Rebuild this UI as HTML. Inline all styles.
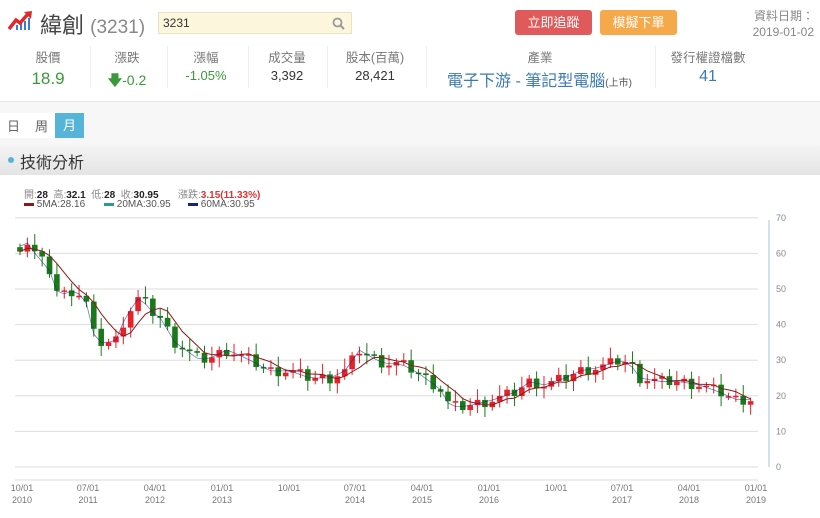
<!DOCTYPE html>
<html><head><meta charset="utf-8">
<style>
body{margin:0;width:820px;height:518px;background:#fff;font-family:"Liberation Sans","Noto Sans CJK TC",sans-serif;position:relative;overflow:hidden;color:#333}
.a{position:absolute;white-space:nowrap}
.lab{font-size:12.5px;color:#777;text-align:center;width:80px}
.val{font-size:15px;text-align:center;width:80px}
.sep{position:absolute;top:46px;width:1px;height:42px;background:#eee}
</style></head><body>
<svg class="a" style="left:8px;top:10px" width="26" height="22" viewBox="0 0 26 22">
<rect x="8" y="15" width="2" height="5" fill="#3a7bd5"/><rect x="12" y="13" width="2" height="7" fill="#3a7bd5"/><rect x="16" y="11" width="2" height="9" fill="#3a7bd5"/><rect x="20" y="8" width="2" height="12" fill="#3a7bd5"/>
<path d="M1 19 L8 10 L12 13 L20 4" stroke="#e02a2a" stroke-width="3.5" fill="none"/><path d="M16 2 L24 1 L23 9 Z" fill="#e02a2a"/></svg>
<div class="a" style="left:40px;top:8px;font-size:22px;color:#444">緯創 <span style="color:#888;font-size:19px">(3231)</span></div>
<div class="a" style="left:158px;top:12px;width:194px;height:22px;background:#fcf6dd;border:1px solid #e9e2c4;box-sizing:border-box;font-size:12px;line-height:20px;padding-left:4px">3231
<svg style="position:absolute;right:6px;top:4px" width="13" height="13"><circle cx="5.5" cy="5.5" r="4" stroke="#999" stroke-width="1.8" fill="none"/><path d="M8.5 8.5L12 12" stroke="#999" stroke-width="2"/></svg></div>
<div class="a" style="left:515px;top:10px;width:77px;height:25px;background:#df5a5a;border-radius:3px;color:#fff;font-size:13px;line-height:25px;text-align:center">立即追蹤</div>
<div class="a" style="left:600px;top:10px;width:77px;height:25px;background:#f5a94a;border-radius:3px;color:#fff;font-size:13px;line-height:25px;text-align:center">模擬下單</div>
<div class="a" style="right:6px;top:8px;font-size:12px;color:#888;line-height:16px;text-align:right">資料日期：<br>2019-01-02</div>

<div class="a lab" style="left:8px;top:47px">股價</div><div class="a val" style="left:8px;top:69px;color:#3a9a3a;font-size:17px">18.9</div>
<div class="a lab" style="left:87px;top:47px">漲跌</div><div class="a val" style="left:87px;top:70px;color:#3a9a3a;font-size:14px"><b>🡇</b>-0.2</div>
<div class="a lab" style="left:166px;top:47px">漲幅</div><div class="a val" style="left:166px;top:68px;color:#3a9a3a;font-size:13px">-1.05%</div>
<div class="a lab" style="left:247px;top:47px">成交量</div><div class="a val" style="left:247px;top:68px;font-size:13px">3,392</div>
<div class="a lab" style="left:335px;top:47px">股本(百萬)</div><div class="a val" style="left:335px;top:68px;font-size:13px">28,421</div>
<div class="a lab" style="left:500px;top:47px">產業</div><div class="a" style="left:447px;top:67px;font-size:16px;color:#3a7ab5">電子下游 - 筆記型電腦<span style="font-size:10px;color:#555">(上市)</span></div>
<div class="a lab" style="left:668px;top:47px">發行權證檔數</div><div class="a val" style="left:668px;top:68px;color:#3a7ab5;font-size:16px">41</div>
<div class="sep" style="left:90px"></div><div class="sep" style="left:167px"></div><div class="sep" style="left:248px"></div><div class="sep" style="left:327px"></div><div class="sep" style="left:426px"></div><div class="sep" style="left:655px"></div>
<div class="a" style="left:0;top:101px;width:820px;height:1px;background:#e5e5e5"></div>
<div class="a" style="left:0;top:102px;width:820px;height:44px;background:#f7f7f7"></div>
<div class="a" style="left:0;top:113px;width:55px;height:25px;background:#fff"></div>
<div class="a" style="left:7px;top:116px;font-size:13px;color:#666">日</div>
<div class="a" style="left:35px;top:116px;font-size:13px;color:#666">周</div>
<div class="a" style="left:55px;top:113px;width:29px;height:25px;background:#55b4d8;color:#fff;font-size:13px;line-height:25px;text-align:center">月</div>
<div class="a" style="left:0;top:145px;width:820px;height:30px;background:linear-gradient(#f4f4f4,#e4e4e4)"></div>
<div class="a" style="left:8px;top:157px;width:6px;height:6px;border-radius:3px;background:#55b4d8"></div>
<div class="a" style="left:20px;top:149px;font-size:16px;color:#333">技術分析</div>

<div class="a" style="left:24px;top:186px;font-size:10px;color:#888">開:<b style="color:#222">28</b>&nbsp; 高:<b style="color:#222">32.1</b>&nbsp; 低:<b style="color:#222">28</b>&nbsp; 收:<b style="color:#222">30.95</b>&nbsp;&nbsp;&nbsp;&nbsp;&nbsp;&nbsp; 漲跌:<b style="color:#d33">3.15(11.33%)</b></div>
<div class="a" style="left:24px;top:199px;font-size:10px;color:#555"><span style="display:inline-block;width:10px;height:3px;background:#8b1a1a;vertical-align:middle"></span> 5MA:28.16</div>
<div class="a" style="left:104px;top:199px;font-size:10px;color:#555"><span style="display:inline-block;width:10px;height:3px;background:#2a9a9a;vertical-align:middle"></span> 20MA:30.95</div>
<div class="a" style="left:188px;top:199px;font-size:10px;color:#555"><span style="display:inline-block;width:10px;height:3px;background:#1a237e;vertical-align:middle"></span> 60MA:30.95</div>

<svg id="c" class="a" style="left:0;top:0" width="820" height="518"></svg>
<script>
var s='';
for(var p=0;p<=70;p+=10){var y=467-3.56*p;s+='<line x1="15" x2="758" y1="'+y+'" y2="'+y+'" stroke="#ddd"/><text x="776" y="'+(y+3)+'" font-size="9" fill="#888" font-family="Liberation Sans">'+p+'</text>';}
s+='<line x1="769" x2="769" y1="220" y2="467" stroke="#aac4e0"/><line x1="15" x2="758" y1="480" y2="480" stroke="#ddd"/>';
var L=[[22,'10/01','2010'],[88,'07/01','2011'],[155,'04/01','2012'],[222,'01/01','2013'],[289,'10/01',''],[355,'07/01','2014'],[422,'04/01','2015'],[489,'01/01','2016'],[556,'10/01',''],[622,'07/01','2017'],[689,'04/01','2018'],[756,'01/01','2019']];
L.forEach(function(l){s+='<text x="'+l[0]+'" y="491" font-size="9" fill="#777" text-anchor="middle" font-family="Liberation Sans">'+l[1]+'</text><text x="'+l[0]+'" y="503" font-size="9" fill="#777" text-anchor="middle" font-family="Liberation Sans">'+l[2]+'</text>';});
var K=[[20,62],[28,63],[35,60],[50,55],[60,47],[68,50],[75,49],[85,48],[92,38],[100,35],[115,35],[122,40],[130,44],[140,48],[150,44],[160,42],[175,35],[190,32],[200,30],[215,31],[225,33],[235,32],[250,30],[270,27],[290,27],[310,25],[330,25],[345,27],[360,33],[370,31],[385,29],[400,29],[415,27],[430,24],[440,22],[450,17],[465,17],[480,18],[495,19],[515,21],[530,24],[545,23],[565,25],[580,27],[600,28],[620,30],[630,29],[640,25],[660,24],[680,24],[700,23],[720,21],[735,19],[757,19]];
function f(x){for(var i=1;i<K.length;i++){if(x<=K[i][0]){var a=K[i-1],b=K[i];return a[1]+(b[1]-a[1])*(x-a[0])/(b[0]-a[0]);}}return 19;}
function Y(p){return 467-3.56*p;}
var prev=f(18),cl=[];
for(var i=0;i<100;i++){var x=20+i*7.38;var c=f(x)+((i*37)%7-3)*0.5;var o=prev;
var hi=Math.max(o,c)+1+(i%3),lo=Math.min(o,c)-1-(i%4)*0.6;var col=c>=o?'#e8202a':'#1a7a1a';
s+='<line x1="'+x+'" x2="'+x+'" y1="'+Y(hi)+'" y2="'+Y(lo)+'" stroke="'+col+'"/>';
var t=Y(Math.max(o,c)),h=Math.max(1.5,Math.abs(o-c)*3.56);
s+='<rect x="'+(x-2.8)+'" y="'+t+'" width="5.6" height="'+h+'" fill="'+col+'"/>';
cl.push(c);prev=c;}
var p1='',p2='';for(var i=0;i<100;i++){var x=20+i*7.38;var n=Math.min(5,i+1),sm=0;for(var j=i-n+1;j<=i;j++)sm+=cl[j];p1+=(i?'L':'M')+x+' '+Y(sm/n);p2+=(i?'L':'M')+x+' '+Y(f(x));}
s+='<path d="'+p1+'" stroke="#8b1a1a" fill="none" stroke-width="1"/><path d="'+p2+'" stroke="#1a237e" fill="none" stroke-width="0.8" opacity="0.6"/>';
document.getElementById('c').innerHTML=s;
</script>
</body></html>
